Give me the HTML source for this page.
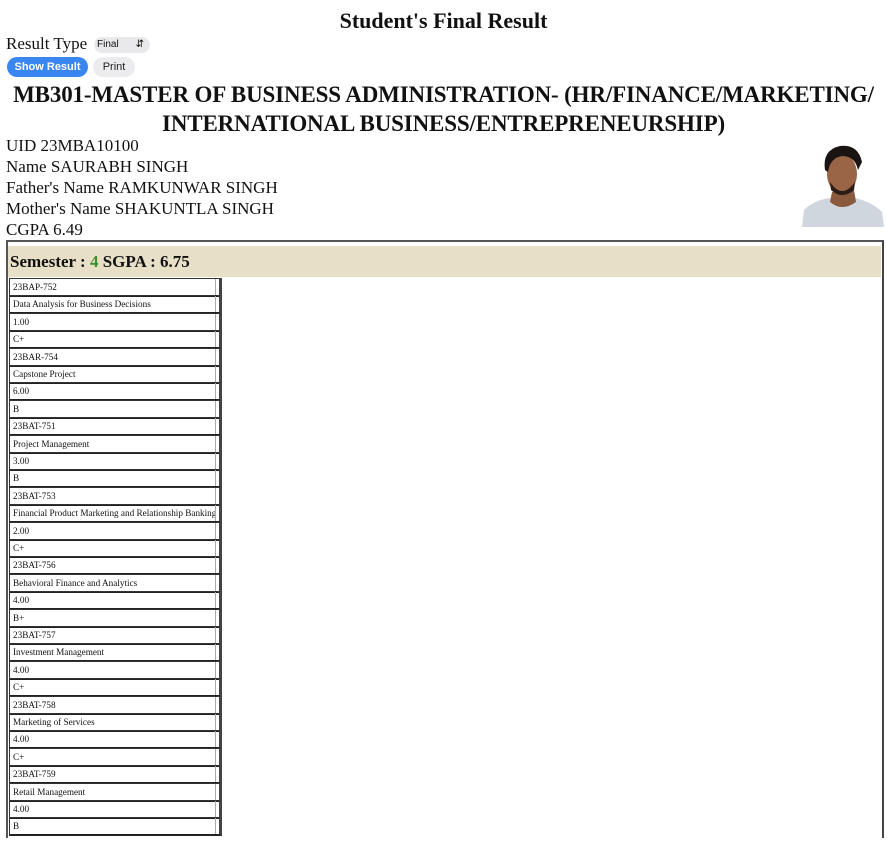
<!DOCTYPE html>
<html style="width:887px;height:848px;overflow:hidden"><head><meta charset="utf-8"><style>
body{margin:0;width:887px;height:848px;overflow:hidden;background:#fff;font-family:"Liberation Serif",serif;color:#111;position:relative}
.a{position:absolute;white-space:nowrap}
.t{left:0;width:887px;text-align:center;font-weight:bold}
.i{left:6px;font-size:17px;line-height:21px}
.btn{position:absolute;font-family:"Liberation Sans",sans-serif;font-size:11px;border-radius:10px;text-align:center;line-height:20px;height:20px}
.row{position:absolute;left:9px;width:206px;height:16px;border:1px solid #333;border-right:3px solid #444;border-bottom:2px solid #222;font-size:9.2px;line-height:16px;padding-left:3px;box-sizing:content-box}
.row::after{content:"";position:absolute;right:3px;top:0;bottom:0;width:1px;background:#aaa}
</style></head><body>
<div class="a t" style="top:8px;font-size:22px">Student's Final Result</div>
<div class="a" style="left:6px;top:34px;font-size:17px">Result Type</div>
<div class="btn" style="left:94px;top:37px;width:56px;height:16px;line-height:16px;background:#e9e9eb;text-align:left;padding-left:3px;box-sizing:border-box;font-size:10px">Final<span style="position:absolute;right:6px">&#8693;</span></div>
<div class="btn" style="left:7px;top:57px;width:81px;background:#3a86f0;color:#fff;font-weight:bold">Show Result</div>
<div class="btn" style="left:93px;top:57px;width:42px;background:#ececee;color:#222">Print</div>
<div class="a t" style="top:80px;font-size:23px;line-height:29px;letter-spacing:-0.15px">MB301-MASTER OF BUSINESS ADMINISTRATION- (HR/FINANCE/MARKETING/<br>INTERNATIONAL BUSINESS/ENTREPRENEURSHIP)</div>
<div class="a i" style="top:135px">UID 23MBA10100<br>Name SAURABH SINGH<br>Father's Name RAMKUNWAR SINGH<br>Mother's Name SHAKUNTLA SINGH<br>CGPA 6.49</div>
<svg class="a" style="left:800px;top:140px" width="85" height="87" viewBox="0 0 85 87">
<rect width="85" height="87" fill="#fff"/>
<path d="M2 87 L4 70 Q14 60 30 58 L55 58 Q72 62 82 72 L84 87Z" fill="#cfd6de"/>
<path d="M32 52 L30 62 Q42 72 56 62 L54 50Z" fill="#8a5a3e"/>
<ellipse cx="42" cy="34" rx="15" ry="20" fill="#9a6446"/>
<path d="M25 30 Q22 10 40 6 Q58 4 62 22 L58 30 Q55 16 42 16 Q30 18 28 32Z" fill="#1a1412"/>
<path d="M30 42 Q42 60 55 42 L54 50 Q42 60 31 50Z" fill="#2a1c16"/>
</svg>
<div class="a" style="left:6px;top:240px;width:874px;height:640px;border:2px solid #555;border-right-color:#444"></div>
<div class="a" style="left:8px;top:246px;width:873px;height:31px;background:#e7dfc6"></div>
<div class="a" style="left:10px;top:250px;font-size:17px;font-weight:bold;line-height:24px">Semester : <span style="color:#3d8f2c">4</span> SGPA : 6.75</div>
<div class="row" style="top:278px">23BAP-752</div>
<div class="row" style="top:295.4px">Data Analysis for Business Decisions</div>
<div class="row" style="top:312.8px">1.00</div>
<div class="row" style="top:330.2px">C+</div>
<div class="row" style="top:347.6px">23BAR-754</div>
<div class="row" style="top:365px">Capstone Project</div>
<div class="row" style="top:382.4px">6.00</div>
<div class="row" style="top:399.8px">B</div>
<div class="row" style="top:417.2px">23BAT-751</div>
<div class="row" style="top:434.6px">Project Management</div>
<div class="row" style="top:452px">3.00</div>
<div class="row" style="top:469.4px">B</div>
<div class="row" style="top:486.8px">23BAT-753</div>
<div class="row" style="top:504.2px">Financial Product Marketing and Relationship Banking</div>
<div class="row" style="top:521.6px">2.00</div>
<div class="row" style="top:539px">C+</div>
<div class="row" style="top:556.4px">23BAT-756</div>
<div class="row" style="top:573.8px">Behavioral Finance and Analytics</div>
<div class="row" style="top:591.2px">4.00</div>
<div class="row" style="top:608.6px">B+</div>
<div class="row" style="top:626px">23BAT-757</div>
<div class="row" style="top:643.4px">Investment Management</div>
<div class="row" style="top:660.8px">4.00</div>
<div class="row" style="top:678.2px">C+</div>
<div class="row" style="top:695.6px">23BAT-758</div>
<div class="row" style="top:713px">Marketing of Services</div>
<div class="row" style="top:730.4px">4.00</div>
<div class="row" style="top:747.8px">C+</div>
<div class="row" style="top:765.2px">23BAT-759</div>
<div class="row" style="top:782.6px">Retail Management</div>
<div class="row" style="top:800px">4.00</div>
<div class="row" style="top:817.4px">B</div>
<div class="a" style="left:0;top:838px;width:887px;height:10px;background:#fff"></div>
</body></html>
